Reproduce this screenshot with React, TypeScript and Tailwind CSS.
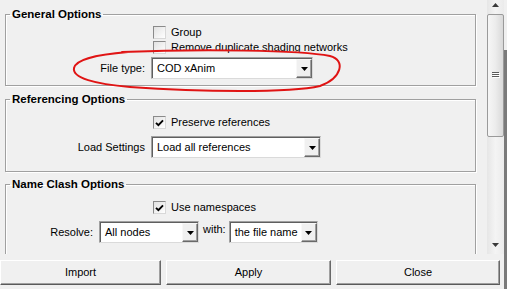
import React from "react";

function Check({ checked }: { checked?: boolean }) {
  return (
    <div className="w-[13px] h-[13px] shrink-0 border border-t-[#8a8a8a] border-l-[#8a8a8a] border-r-[#d8d8d8] border-b-[#d8d8d8] bg-gradient-to-br from-[#e2e2e2] to-white flex items-center justify-center">
      {checked && (
        <svg width="9" height="8" viewBox="0 0 9 8">
          <polyline points="1,3.8 3.4,6.2 8,1.4" fill="none" stroke="#000" strokeWidth="1.9" />
        </svg>
      )}
    </div>
  );
}

function Combo({ cls, text }: { cls: string; text: string }) {
  return (
    <div
      className={
        "flex h-[22px] bg-white border border-t-[#a0a0a0] border-l-[#a0a0a0] border-r-[#dadada] border-b-[#dadada] shadow-[inset_1px_1px_0_#5f5f5f] " +
        cls
      }
    >
      <div className="flex-1 flex items-center pl-[5px] pt-[1px] whitespace-nowrap overflow-hidden">{text}</div>
      <div className="w-[16px] mt-[1px] bg-[#f0f0f0] border border-t-[#f8f8f8] border-l-[#f8f8f8] border-r-[#696969] border-b-[#696969] shadow-[inset_-1px_-1px_0_#a0a0a0] flex items-center justify-center">
        <svg width="7" height="4" viewBox="0 0 7 4">
          <polygon points="0,0 7,0 3.5,4" fill="#000" />
        </svg>
      </div>
    </div>
  );
}

function Frame({ title, cls, children }: { title: string; cls: string; children: React.ReactNode }) {
  return (
    <fieldset
      className={
        "ml-[5px] mr-[11px] border border-[#a0a0a0] shadow-[inset_1px_1px_0_#ffffff,1px_1px_0_#ffffff] px-0 " + cls
      }
    >
      <legend className="ml-[4px] px-[2px] font-bold text-[11.5px] leading-[16px]">{title}</legend>
      {children}
    </fieldset>
  );
}

function Btn({ cls, label }: { cls: string; label: string }) {
  return (
    <div
      className={
        "h-[25px] bg-[#f0f0f0] border border-t-white border-l-white border-r-[#696969] border-b-[#5a5a5a] shadow-[inset_-1px_-1px_0_#a0a0a0] flex items-center justify-center " +
        cls
      }
    >
      {label}
    </div>
  );
}

export default function App() {
  return (
    <div className="relative w-[507px] h-[289px] bg-[#f0f0f0] overflow-hidden font-['Liberation_Sans',Arial,sans-serif] text-[11px] leading-[13px] text-black">
      <div className="flex h-[254px]">
        <div className="w-[487px] overflow-hidden flex flex-col">
          <Frame title="General Options" cls="mt-[6px] pt-[4px] pb-[6px]">
            <div className="flex items-center h-[13px] pl-[147px] gap-[5px]">
              <Check />
              <span>Group</span>
            </div>
            <div className="flex items-center h-[13px] pl-[147px] gap-[5px] mt-[2px]">
              <Check />
              <span>Remove duplicate shading networks</span>
            </div>
            <div className="flex items-center mt-[3px] gap-[6px]">
              <span className="w-[139px] text-right">File type:</span>
              <Combo cls="w-[162px]" text="COD xAnim" />
            </div>
          </Frame>

          <Frame title="Referencing Options" cls="mt-[5px] pt-[9px] pb-[13px]">
            <div className="flex items-center h-[13px] pl-[147px] gap-[5px]">
              <Check checked />
              <span>Preserve references</span>
            </div>
            <div className="flex items-center mt-[7px] gap-[6px]">
              <span className="w-[139px] text-right">Load Settings</span>
              <Combo cls="w-[170px]" text="Load all references" />
            </div>
          </Frame>

          <Frame title="Name Clash Options" cls="mt-[4px] pt-[9px] pb-[20px]">
            <div className="flex items-center h-[13px] pl-[147px] gap-[5px]">
              <Check checked />
              <span>Use namespaces</span>
            </div>
            <div className="flex items-center mt-[7px]">
              <span className="w-[87px] text-right">Resolve:</span>
              <Combo cls="ml-[6px] w-[100px]" text="All nodes" />
              <span className="ml-[4px] mb-[5px]">with:</span>
              <Combo cls="ml-[3px] w-[89px]" text="the file name" />
            </div>
          </Frame>
        </div>

        <div className="w-[17px] flex flex-col bg-gradient-to-r from-[#e6e6e6] via-[#f4f4f4] to-[#ebebeb]">
          <div className="h-[14px] flex justify-center pt-[3px]">
            <svg width="7" height="4" viewBox="0 0 7 4">
              <polygon points="3.5,0 7,4 0,4" fill="#3a3a3a" />
            </svg>
          </div>
          <div className="h-[123px] border border-[#9a9a9a] rounded-[2px] bg-gradient-to-r from-[#f6f6f6] via-[#ececec] to-[#d9d9d9] flex items-center justify-center">
            <svg width="8" height="7" viewBox="0 0 8 7">
              <rect x="0" y="0" width="7" height="1" fill="#5a5a5a" />
              <rect x="0" y="2" width="7" height="1" fill="#5a5a5a" />
              <rect x="0" y="4" width="7" height="1" fill="#5a5a5a" />
              <rect x="1" y="1" width="7" height="1" fill="#ffffff" />
              <rect x="1" y="3" width="7" height="1" fill="#ffffff" />
              <rect x="1" y="5" width="7" height="1" fill="#ffffff" />
            </svg>
          </div>
          <div className="flex-1" />
          <div className="h-[17px] flex justify-center pt-[6px]">
            <svg width="7" height="4" viewBox="0 0 7 4">
              <polygon points="0,0 7,0 3.5,4" fill="#3a3a3a" />
            </svg>
          </div>
        </div>

        <div className="w-[3px] flex flex-col">
          <div className="h-[50px]" />
          <div className="flex-1 bg-[#7a7a7a]" />
        </div>
      </div>

      <div className="flex pt-[6px]">
        <Btn cls="w-[161px]" label="Import" />
        <Btn cls="ml-[5px] w-[165px]" label="Apply" />
        <Btn cls="ml-[5px] w-[164px]" label="Close" />
      </div>
      <div className="absolute right-0 top-[254px] w-[3px] h-[35px] bg-[#7a7a7a]" />

      <svg className="absolute left-0 top-0 pointer-events-none" width="507" height="289" viewBox="0 0 507 289">
        <path
          d="M 122 52 C 200 49, 300 50, 330 56 C 346 60, 342 78, 320 86 C 290 93, 200 92, 130 87 C 95 84, 72 78, 74 68 C 76 60, 92 55, 128 52"
          fill="none"
          stroke="#e01414"
          strokeWidth="2"
          strokeLinecap="round"
        />
      </svg>
    </div>
  );
}
